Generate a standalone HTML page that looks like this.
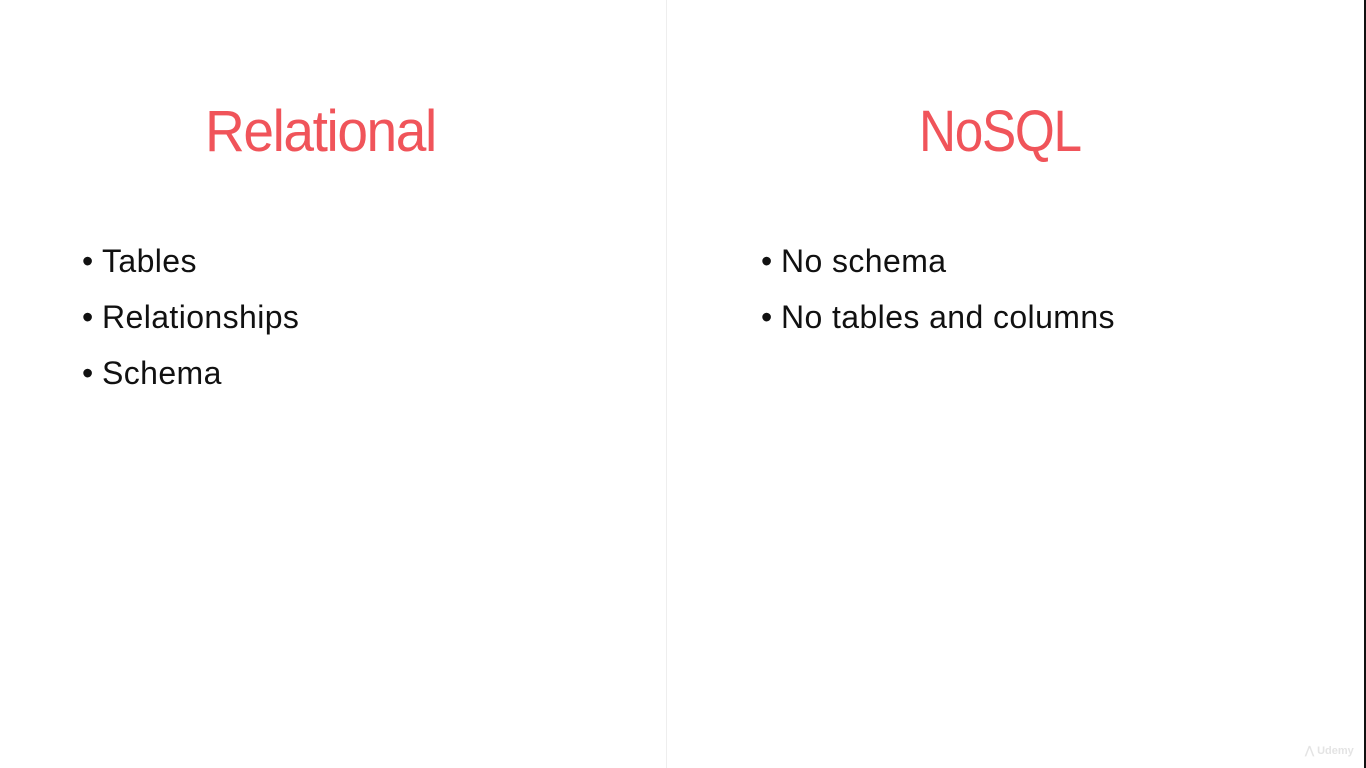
<!DOCTYPE html>
<html><head><style>
body{margin:0;width:1366px;height:768px;background:#fff;position:relative;overflow:hidden;font-family:"Liberation Sans",sans-serif;}
.div{position:absolute;left:666px;top:0;width:1px;height:768px;background:#eeeeee;}
.edge{position:absolute;right:0;top:0;width:2px;height:768px;background:#111;}
.t{position:absolute;color:#f0545a;font-size:58px;letter-spacing:-1.5px;line-height:1;white-space:nowrap;transform-origin:left top;}
.b{position:absolute;font-size:32px;color:#111;line-height:1;white-space:nowrap;letter-spacing:0.4px;}
.b span{display:inline-block;width:20px;}
.logo{position:absolute;left:1305px;top:744px;color:#e4e4e4;font-size:11px;font-weight:bold;}
</style></head><body>
<div class="div"></div><div class="edge"></div>
<div class="t" style="left:205px;top:103px;transform:scaleX(0.95)">Relational</div>
<div class="t" style="left:919px;top:103px;transform:scaleX(0.885)">NoSQL</div>
<div class="b" style="left:82px;top:245px"><span>•</span>Tables</div>
<div class="b" style="left:82px;top:301px"><span>•</span>Relationships</div>
<div class="b" style="left:82px;top:357px"><span>•</span>Schema</div>
<div class="b" style="left:761px;top:245px"><span>•</span>No schema</div>
<div class="b" style="left:761px;top:301px"><span>•</span>No tables and columns</div>
<div class="logo">⋀ Udemy</div>
</body></html>
